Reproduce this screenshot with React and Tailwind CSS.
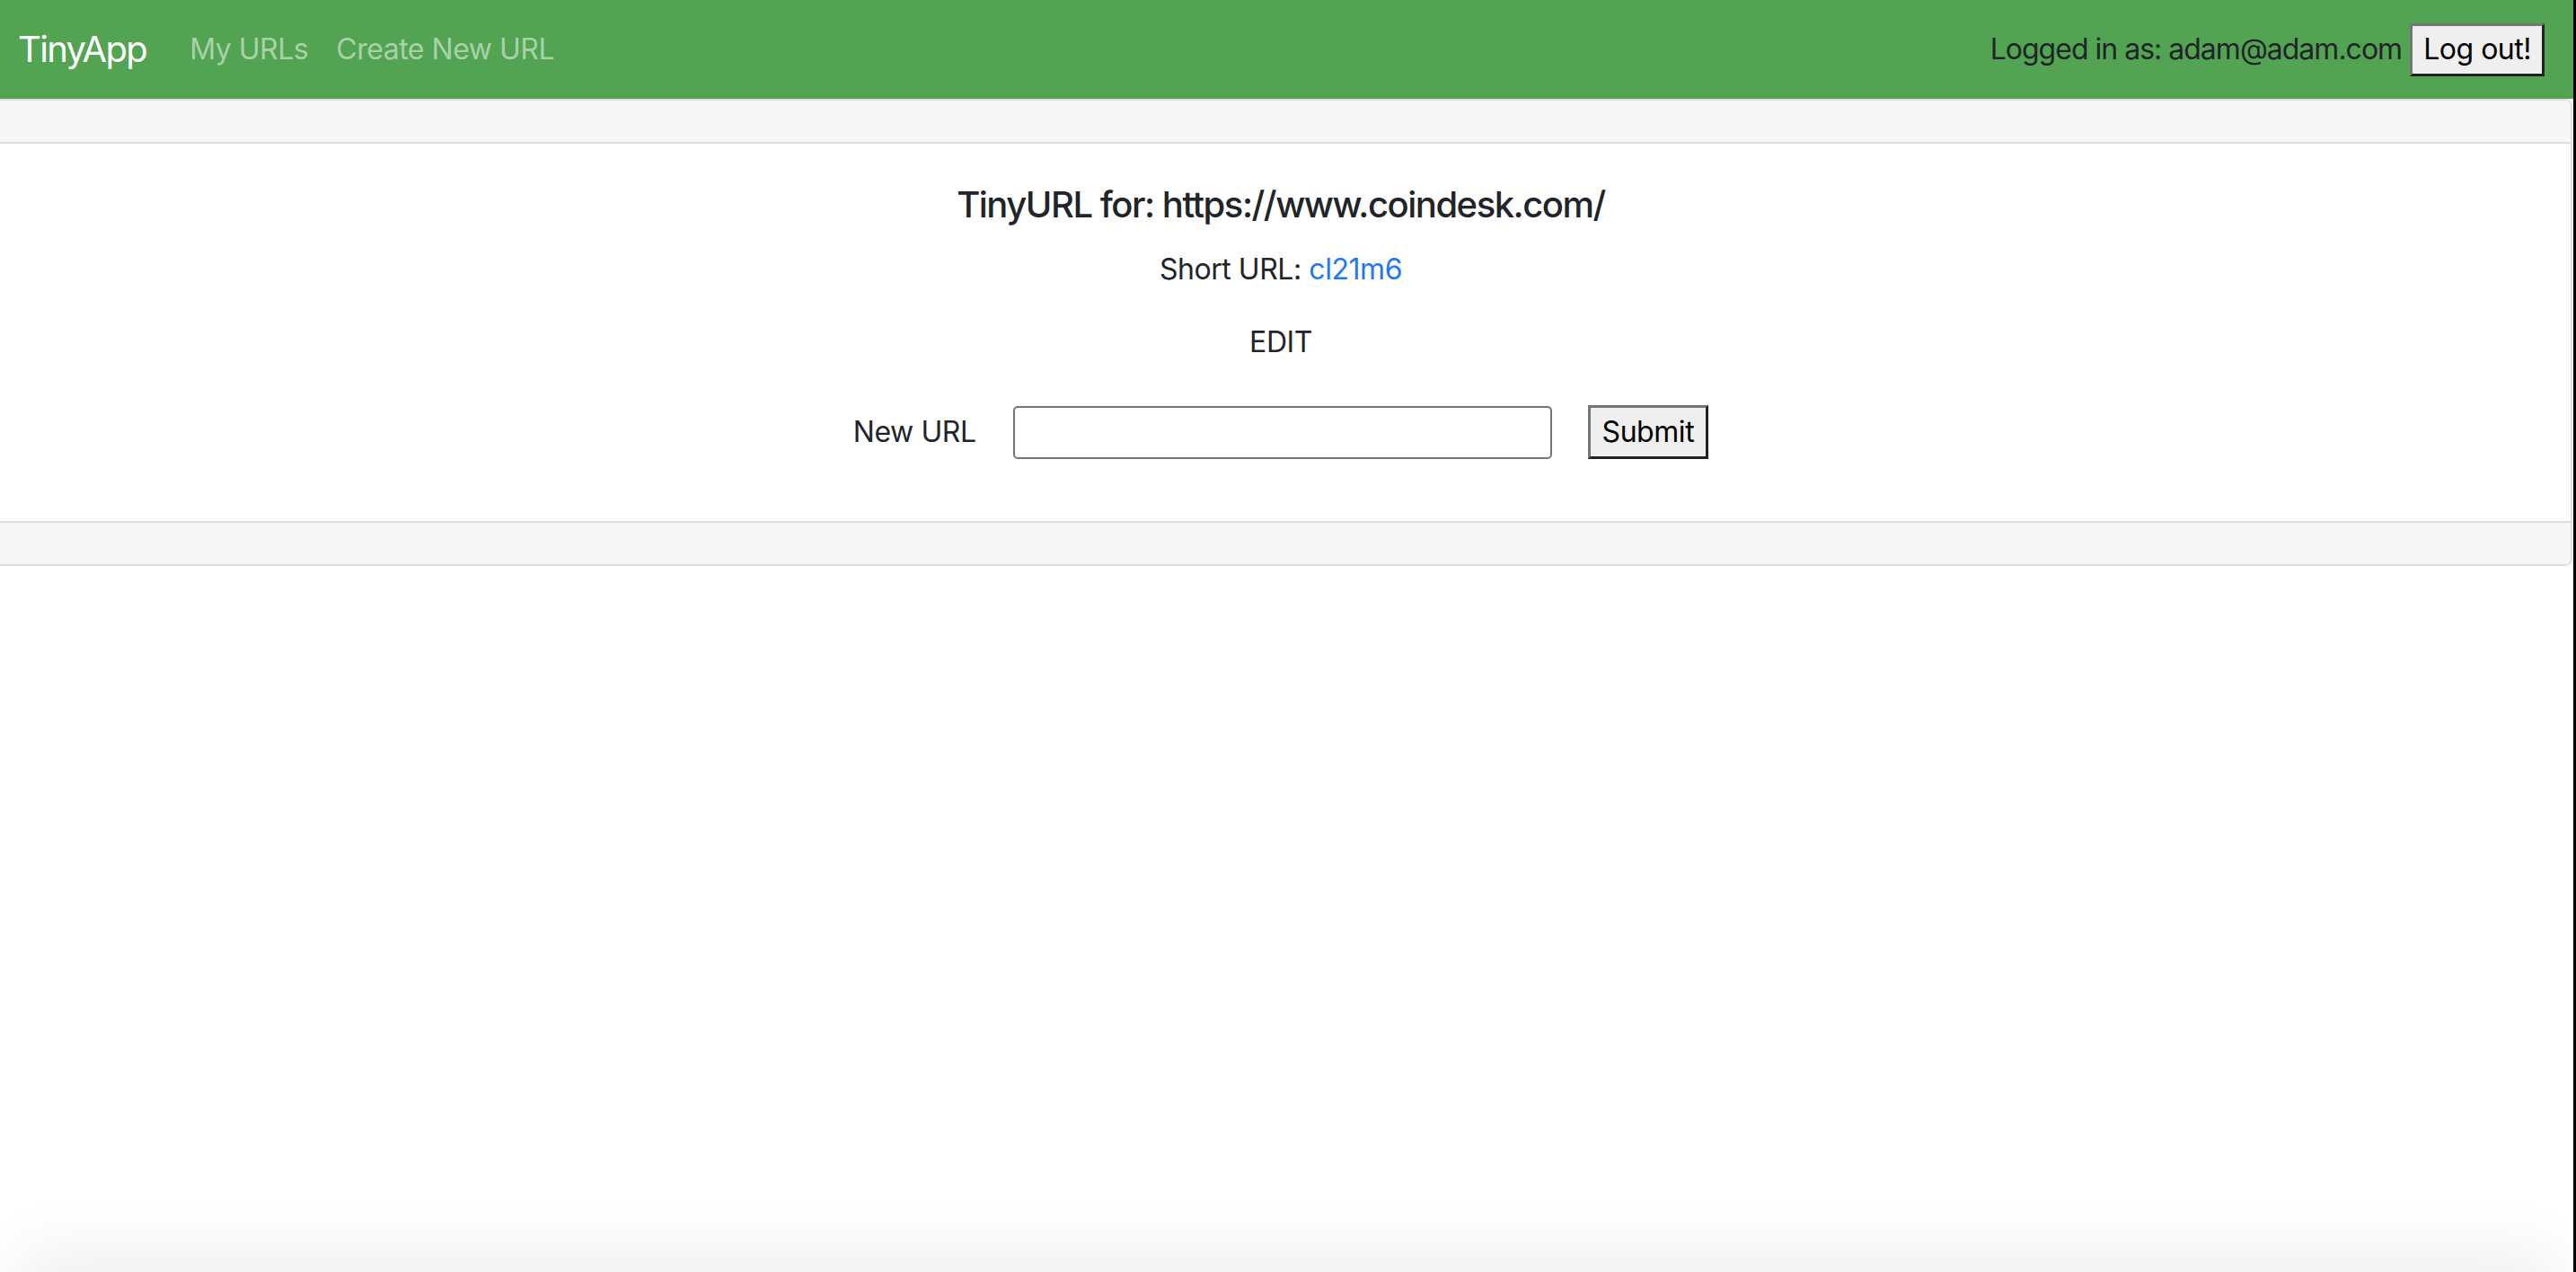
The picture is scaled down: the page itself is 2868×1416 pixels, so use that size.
import React from 'react';

const font = { fontFamily: 'Inter, "Liberation Sans", sans-serif' };

const Navbar = () => (
    <nav className="h-[110px] bg-[#52a452] flex items-center pl-[20px] pr-[32px] tracking-[-0.03em]">
        <span className="text-[40px] leading-[60px] text-white mr-[48px] tracking-[-0.042em]">TinyApp</span>
        <a className="text-[32px] text-[#a8d1a8] mr-[31px]">My URLs</a>
        <a className="text-[32px] text-[#a8d1a8]">Create New URL</a>
        <div className="ml-auto flex items-center gap-[9px]">
            <span className="text-[32px] text-[#212529] tracking-[-0.031em]">Logged in as: adam@adam.com</span>
            <button className="h-[59px] px-[12px] bg-[#efefef] text-black text-[32px] leading-none border-[3px] border-t-[#767676] border-l-[#767676] border-r-[#222] border-b-[#222]">
                Log out!
            </button>
        </div>
    </nav>
);

const UrlCard = () => (
    <div className="ml-[-12px] mr-[1px] border-2 border-[#dfdfdf] rounded-[8px] overflow-hidden">
        <div className="h-[48px] bg-[#f7f7f7] border-b-2 border-[#dfdfdf]" />
        <div className="h-[420px] pt-[44px] flex flex-col items-center text-[#212529] tracking-[-0.028em]">
            <h5 className="text-[40px] leading-[48px] font-medium tracking-[-0.037em]">TinyURL for: https://www.coindesk.com/</h5>
            <p className="mt-[24px] text-[32px] leading-[48px]">
                Short URL: <a className="text-[#1f78f4]">cl21m6</a>
            </p>
            <p className="mt-[33px] text-[32px] leading-[48px]">EDIT</p>
            <form className="mt-[46px] flex items-center" onSubmit={(e) => e.preventDefault()}>
                <label className="text-[32px] mr-[41px]">New URL</label>
                <input type="text" className="w-[600px] h-[59px] border-2 border-[#767676] rounded-[5px] bg-white mr-[40px]" />
                <button className="h-[60px] px-[13px] bg-[#efefef] text-black text-[32px] leading-none border-[3px] border-t-[#767676] border-l-[#767676] border-r-[#222] border-b-[#222]">
                    Submit
                </button>
            </form>
        </div>
        <div className="h-[48px] bg-[#f7f7f7] border-t-2 border-[#dfdfdf]" />
    </div>
);

export default function App() {
    return (
        <div className="relative flex h-[1416px] overflow-hidden bg-white" style={font}>
            <div className="flex-1 min-w-0">
                <Navbar />
                <UrlCard />
            </div>
            <div className="w-[3px] bg-black" />
            <div className="absolute left-[40px] right-[40px] top-[1416px] h-[100px] shadow-[0_0_80px_20px_rgba(0,0,0,0.07)]" />
        </div>
    );
}
